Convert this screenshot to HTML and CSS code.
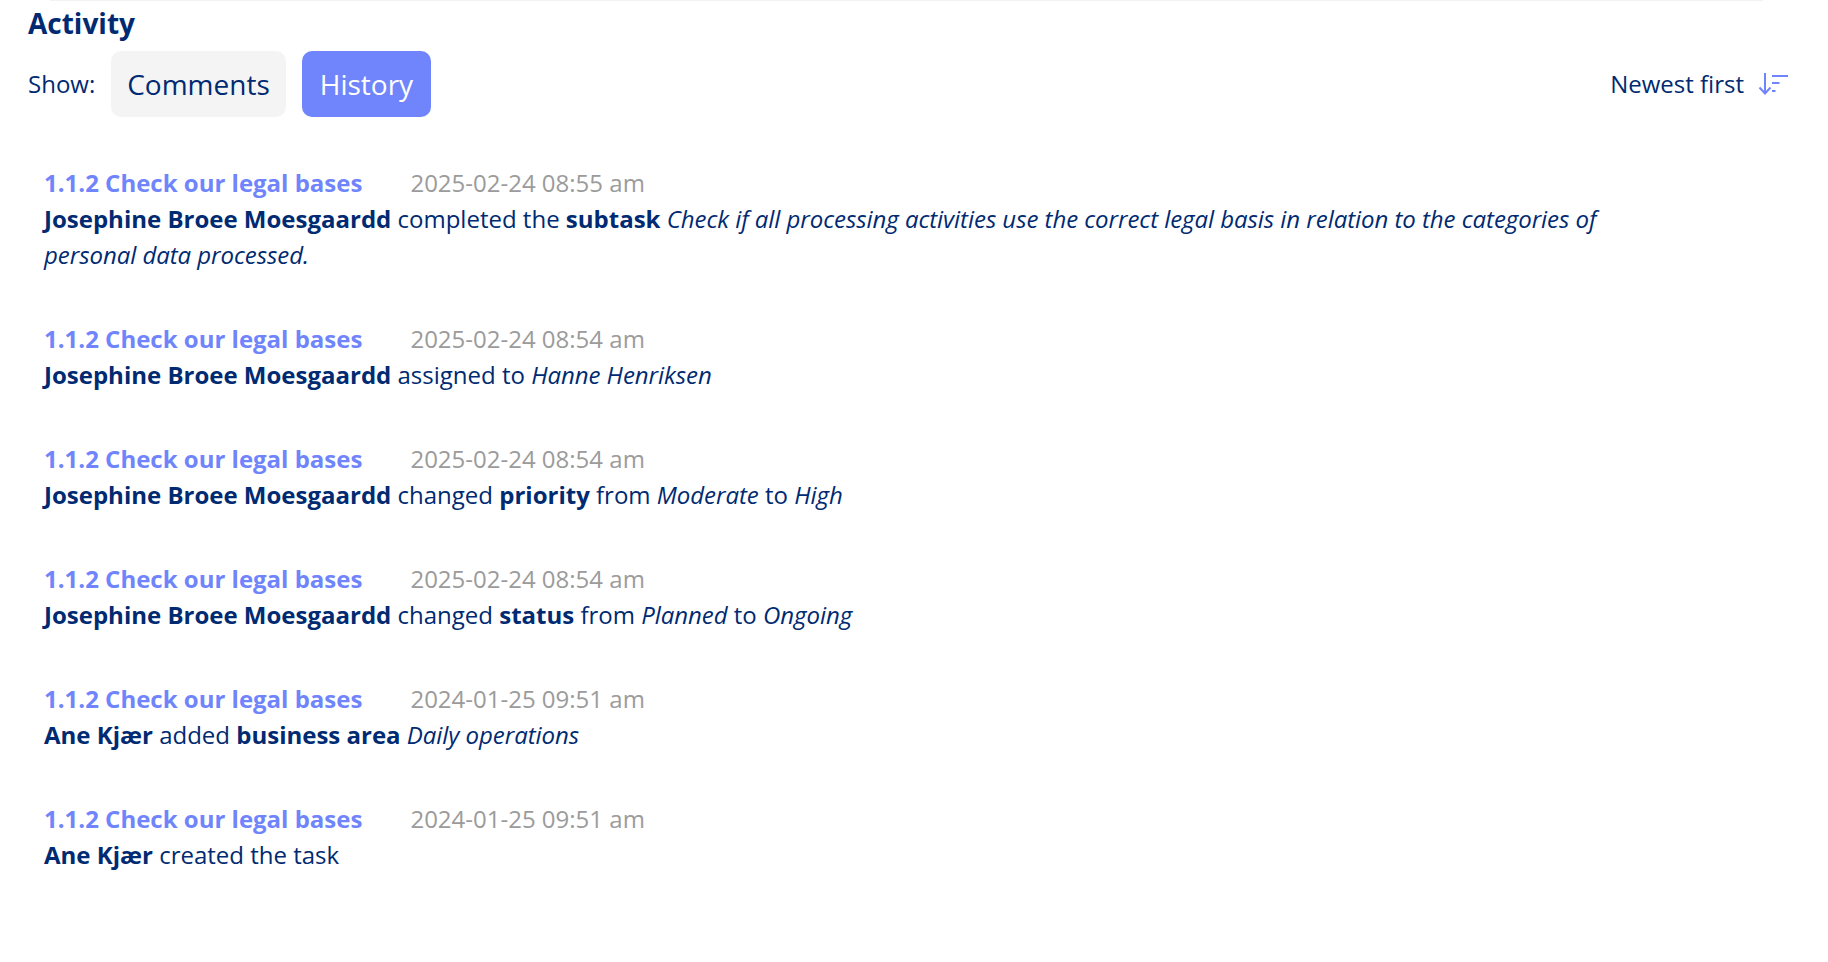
FILE: index.html
```html
<!DOCTYPE html>
<html lang="en">
<head>
  <meta charset="UTF-8" />
  <title>Activity</title>
  <link rel="stylesheet" href="styles.css">
</head>
<body>
  <div class="top-line"></div>

  <section class="activity">
    <h2 class="activity-title">Activity</h2>

    <div class="toolbar">
      <div class="show">
        <span class="show-label">Show:</span>
        <button class="tab">Comments</button>
        <button class="tab active">History</button>
      </div>
      <div class="sort">
        <span>Newest first</span>
        <svg class="sort-icon" width="32" height="26" viewBox="0 0 32 26" fill="none" stroke="#7085fb" stroke-width="2">
          <path d="M8 3V23M2.500 17.500 8 23.500 13.500 17.500" />
          <path d="M15 6H31M15 13H22.500M15 21H18.500" />
        </svg>
      </div>
    </div>

    <ul class="entries">
      <li class="entry">
        <div class="entry-head"><a class="task">1.1.2 Check our legal bases</a><span class="time">2025-02-24 08:55 am</span></div>
        <p><b>Josephine Broee Moesgaardd</b> completed the <b>subtask</b> <i>Check if all processing activities use the correct legal basis in relation to the categories of personal data processed.</i></p>
      </li>
      <li class="entry">
        <div class="entry-head"><a class="task">1.1.2 Check our legal bases</a><span class="time">2025-02-24 08:54 am</span></div>
        <p><b>Josephine Broee Moesgaardd</b> assigned to <i>Hanne Henriksen</i></p>
      </li>
      <li class="entry">
        <div class="entry-head"><a class="task">1.1.2 Check our legal bases</a><span class="time">2025-02-24 08:54 am</span></div>
        <p><b>Josephine Broee Moesgaardd</b> changed <b>priority</b> from <i>Moderate</i> to <i>High</i></p>
      </li>
      <li class="entry">
        <div class="entry-head"><a class="task">1.1.2 Check our legal bases</a><span class="time">2025-02-24 08:54 am</span></div>
        <p><b>Josephine Broee Moesgaardd</b> changed <b>status</b> from <i>Planned</i> to <i>Ongoing</i></p>
      </li>
      <li class="entry">
        <div class="entry-head"><a class="task">1.1.2 Check our legal bases</a><span class="time">2024-01-25 09:51 am</span></div>
        <p><b>Ane Kjær</b> added <b>business area</b> <i>Daily operations</i></p>
      </li>
      <li class="entry">
        <div class="entry-head"><a class="task">1.1.2 Check our legal bases</a><span class="time">2024-01-25 09:51 am</span></div>
        <p><b>Ane Kjær</b> created the task</p>
      </li>
    </ul>
  </section>
</body>
</html>
```

FILE: styles.css
```css
body {
  font-family: 'Open Sans', sans-serif;
  margin: 0;
  background: #fff;
  color: #002a71;
}
.top-line {
  height: 1px;
  margin: 0 65px 0 50px;
  background: #f2f2f2;
}
.activity {
  padding: 0 39px 0 28px;
}
.activity-title {
  margin: 0;
  font-size: 28px;
  line-height: 44px;
  font-weight: 700;
}
.toolbar {
  display: flex;
  align-items: center;
  justify-content: space-between;
  margin-top: 6px;
}
.show {
  display: flex;
  align-items: center;
}
.show-label {
  font-size: 24px;
  margin-right: 16px;
  padding-bottom: 2px;
}
.tab {
  font-family: inherit;
  font-size: 28px;
  height: 66px;
  padding: 0 16px;
  margin-right: 16px;
  border: none;
  border-radius: 10px;
  background: #f4f4f4;
  color: #002a71;
}
.tab.active {
  padding: 0 18px;
  background: #7085fb;
  color: #fff;
}
.sort {
  display: flex;
  align-items: center;
  gap: 13px;
  font-size: 24px;
  padding-bottom: 2px;
}
.entries {
  list-style: none;
  margin: 0;
  padding: 0 0 0 16px;
}
.entry {
  margin-top: 48px;
}
.entry-head {
  display: flex;
  font-size: 24px;
  line-height: 36px;
}
.task {
  font-weight: 700;
  color: #7085fb;
}
.time {
  margin-left: 48px;
  color: #9b9b9b;
}
.entry p {
  margin: 0;
  max-width: 1570px;
  font-size: 24px;
  line-height: 36px;
}
.entry i {
  letter-spacing: -0.05px;
}
```
